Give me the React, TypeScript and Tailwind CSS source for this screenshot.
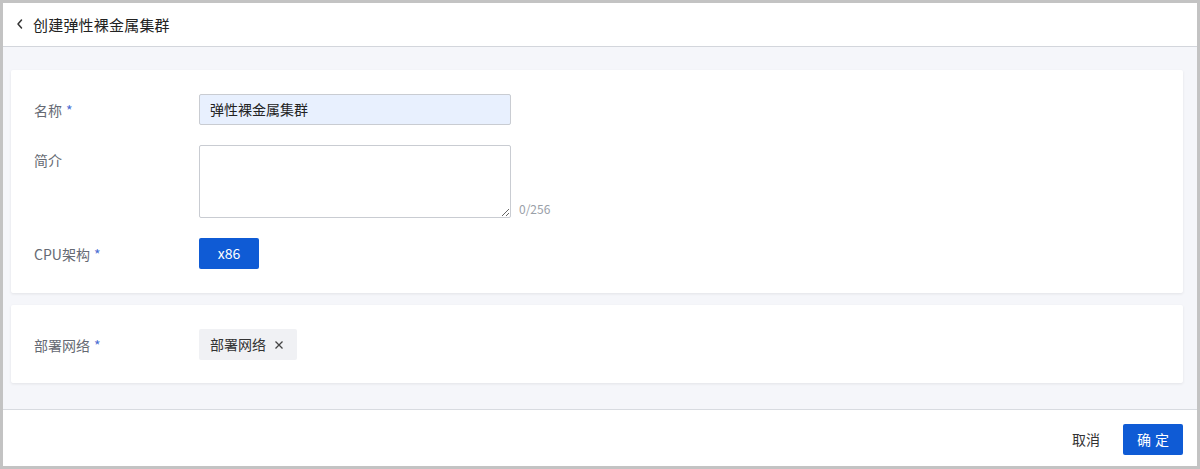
import React from "react";

const font = { fontFamily: '"Noto Sans CJK SC", "Noto Sans", "Liberation Sans", sans-serif' };

function Label({ text, required }: { text: string; required?: boolean }) {
  return (
    <div className="w-[165px] shrink-0 text-[14px] text-[#666a73] leading-[20px]">
      {text}
      {required && <span className="ml-[4px] text-[#4b6ed3]">*</span>}
    </div>
  );
}

export default function App() {
  return (
    <div className="w-[1200px] h-[469px] bg-[#c3c3c3] p-[3px]" style={font}>
      <div className="w-full h-full bg-white flex flex-col">
        {/* header */}
        <div className="h-[44px] shrink-0 flex items-center border-b border-[#d3d6dc] pl-[13px]">
          <svg width="8" height="12" viewBox="0 0 8 12" className="mt-[-1px]">
            <path d="M5.5 2 L2 6 L5.5 10" fill="none" stroke="#333" strokeWidth="1.5" strokeLinecap="round" strokeLinejoin="round" />
          </svg>
          <span className="ml-[9px] text-[15px] text-[#222] leading-[20px] tracking-[0.2px]">创建弹性裸金属集群</span>
        </div>

        {/* content */}
        <div className="flex-1 bg-[#f5f6fa] pl-[8px] pr-[14px] pt-[23px] flex flex-col gap-[12px]">
          <div className="bg-white rounded-[2px] shadow-[0_1px_3px_rgba(0,0,0,0.08)] pl-[23px] py-[24px] flex flex-col gap-[20px]">
            <div className="flex items-center">
              <Label text="名称" required />
              <div className="w-[312px] h-[31px] bg-[#e8f0fe] border border-[#c9ccd2] rounded-[2px] flex items-center pl-[10px] text-[14px] text-[#222]">
                弹性裸金属集群
              </div>
            </div>
            <div className="flex items-start">
              <div className="pt-[5px]">
                <Label text="简介" />
              </div>
              <textarea
                className="w-[312px] h-[73px] border border-[#c9ccd2] rounded-[2px] bg-white outline-none"
                style={{ resize: "both" }}
              />
              <span className="self-end ml-[8px] text-[12px] text-[#9aa0a8] leading-[16px] mb-[1px]">0/256</span>
            </div>
            <div className="flex items-center">
              <Label text="CPU架构" required />
              <button className="w-[60px] h-[31px] bg-[#0f5bd5] rounded-[2px] text-white text-[14px]">x86</button>
            </div>
          </div>

          <div className="bg-white rounded-[2px] shadow-[0_1px_3px_rgba(0,0,0,0.08)] pl-[23px] pt-[24px] pb-[23px] flex items-center">
            <Label text="部署网络" required />
            <div className="h-[31px] w-[98px] bg-[#f0f1f4] rounded-[2px] flex items-center pl-[11px] text-[14px] text-[#333]">
              部署网络
              <svg width="10" height="10" viewBox="0 0 10 10" className="ml-[8px] mt-[1px]">
                <path d="M1.5 1.5 L8.5 8.5 M8.5 1.5 L1.5 8.5" stroke="#444" strokeWidth="1.3" />
              </svg>
            </div>
          </div>
        </div>

        {/* footer */}
        <div className="h-[57px] shrink-0 border-t border-[#d8dbe0] flex items-center justify-end pr-[14px] pt-[3px]">
          <span className="text-[14px] text-[#333] mr-[23px]">取消</span>
          <button className="w-[60px] h-[31px] bg-[#0f5bd5] rounded-[2px] text-white text-[14px] tracking-[4px] pl-[4px]">确定</button>
        </div>
      </div>
    </div>
  );
}
